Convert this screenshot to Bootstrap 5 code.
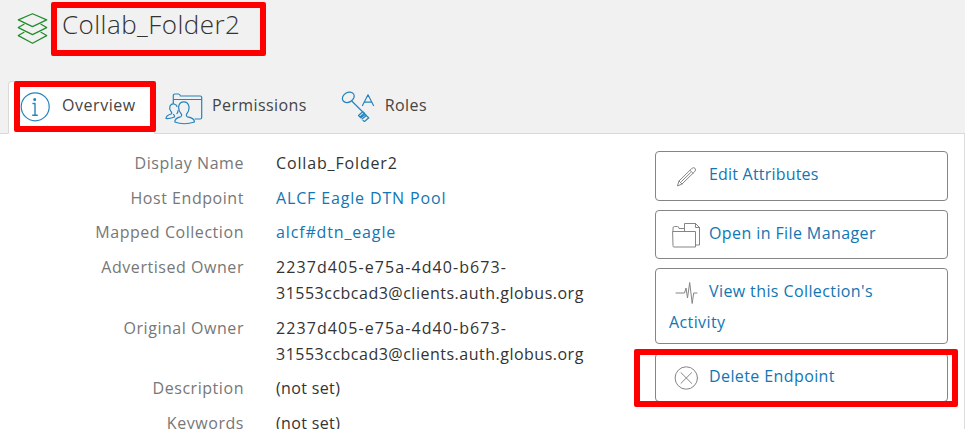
<!DOCTYPE html>
<html lang="en">
<head>
<meta charset="utf-8">
<meta name="viewport" content="width=device-width, initial-scale=1">
<title>Collab_Folder2</title>
<link href="https://cdn.jsdelivr.net/npm/bootstrap@5.3.0/dist/css/bootstrap.min.css" rel="stylesheet">
<style>
body{font-family:"Open Sans","Noto Sans",sans-serif;font-size:16px;line-height:26px;color:#333;height:429px;background:#fff}
svg{fill:none;stroke-linecap:round;stroke-linejoin:round;flex:none}
.page-head{background:#f1f1f1;height:81px;padding:9px 0 0 17px}
.page-head h1{font-size:26px;line-height:30px;font-weight:300;color:#333;margin-left:14px;letter-spacing:.45px}
.layers{margin-top:4px;stroke:#218c2c;stroke-width:1.2}
.tabs{background:#f1f1f1;height:53px;border-bottom:1px solid #d9d9d9;padding-left:8px}
.tabs .nav-link{color:#444;padding:0;height:53px;line-height:47px;display:flex;border:1px solid transparent;border-radius:4px 4px 0 0;letter-spacing:.4px}
.tabs .nav-link.active{background:#fff;border-color:#d9d9d9 #d9d9d9 #fff;width:147px;letter-spacing:.55px}
.blue{stroke:#2584bd;stroke-width:1.2}
.grey{stroke:#858585;stroke-width:1}
.i-info{margin:10px 12px 0 11px}
.i-perm{margin:10px 8px 0 8px}
.i-role{margin:8px 10px 0 32px}
.content{border-right:1px solid #ddd;height:295px;padding-top:16px}
.details{width:655px}
.details dt{width:244px;text-align:right;font-weight:400;color:#777;letter-spacing:.55px}
.details dd{margin:0 0 0 32px;white-space:nowrap;letter-spacing:.85px}
.details .item{display:flex;margin-bottom:8.7px}
.details .uuid{letter-spacing:1.08px}
.details .host{letter-spacing:.5px}
.details .unset{letter-spacing:.35px}
a,.details a{color:#1176b3;text-decoration:none}
.actions{width:293px;padding-top:1px;gap:9px}
.actions .btn{border:1px solid #858585;border-radius:4px;color:#1176b3;text-align:left;padding:7px 13px 0;line-height:31px;font-size:16px;height:49.5px;letter-spacing:.4px}
.actions svg{width:34px;height:30px;margin:-8px 6px -8px 0;vertical-align:-3px}
.actions .edit{letter-spacing:.2px}
.actions .two{height:75.5px}
.mark-box{border:6px solid #f00;border-radius:2px;pointer-events:none}
.m1{left:51px;top:2px;width:215px;height:54px}
.m2{left:14px;top:81px;width:142px;height:51px}
.m3{left:634px;top:349px;width:324px;height:58px}
</style>
<script src="https://cdn.jsdelivr.net/npm/bootstrap@5.3.0/dist/js/bootstrap.bundle.min.js"></script>
</head>
<body class="position-relative overflow-hidden">
<header class="page-head d-flex align-items-start">
<svg class="layers" width="31" height="32" viewBox="0 0 31 32"><path d="M15.500 .8 29.700 6.900 15.500 13.600 1.300 6.900ZM7 11.300 1.300 14.600l14.200 7 14.200-7L24 11.300M7 19.300 1.300 22.600l14.200 7.700 14.200-7.700L24 19.300"/></svg>
<h1 class="mb-0">Collab_Folder2</h1>
</header>
<nav class="tabs nav flex-nowrap">
<a class="nav-link active" href="#"><svg class="blue i-info" width="30" height="30" viewBox="0 0 30 30"><circle cx="15.200" cy="14.800" r="14"/><path d="M13 11.500H15V23M12.700 23.300H17.300" stroke-width="1.400"/><circle cx="14.700" cy="7.500" r=".9" fill="#2584bd"/></svg><span>Overview</span></a>
<a class="nav-link" href="#"><svg class="blue i-perm" width="40" height="34" viewBox="0 0 40 34"><path d="M9.300 11.500V3.700Q9.300 2 11 2H14.500Q16 2 16.300 4H36.200Q37.700 4 37.700 5.500V25.500Q37.700 27 36.200 27H31M9.300 7.500H37.700"/><path d="M9.500 22.500Q11 23.500 10.500 25Q5 27 2 26.500Q2 23.500 7 22Q8.500 21 7 19.500Q5 16.500 6 14Q7.500 11.500 10 12Q12.500 12.500 13 14.500M14 18.500Q14 20.500 13 21.500"/><path d="M17.300 22C13 17.500 14 9.800 19.800 9.800S26.500 17.500 22.700 22Q21.800 24 23.500 24.800Q30.500 26 30.500 30Q20 33.500 10.800 30Q10.800 26 16.500 24.800Q18.300 24 17.300 22Z"/></svg><span>Permissions</span></a>
<a class="nav-link" href="#"><svg class="blue i-role" width="34" height="34" viewBox="0 0 34 34"><ellipse cx="7.300" cy="7.300" rx="6.300" ry="4.800" transform="rotate(-32 7.300 7.300)"/><path d="M11 11.300 27.800 28M21.500 15.500 27 4.800 32.500 15.500M23.300 12.200H30.800M22 21.500 17.500 25.500 19 27 23.500 23M19.800 27.800 24.500 24.300M21 29 25.500 25.500M22 30.500 23.500 31.500 27.500 28"/></svg><span>Roles</span></a>
</nav>
<main class="content d-flex">
<dl class="details mb-0">
<div class="item"><dt>Display Name</dt><dd>Collab_Folder2</dd></div>
<div class="item"><dt>Host Endpoint</dt><dd><a href="#">ALCF Eagle DTN Pool</a></dd></div>
<div class="item"><dt>Mapped Collection</dt><dd><a href="#">alcf#dtn_eagle</a></dd></div>
<div class="item"><dt>Advertised Owner</dt><dd><span class="uuid">2237d405-e75a-4d40-b673-</span><br><span class="host">31553ccbcad3@clients.auth.globus.org</span></dd></div>
<div class="item"><dt>Original Owner</dt><dd><span class="uuid">2237d405-e75a-4d40-b673-</span><br><span class="host">31553ccbcad3@clients.auth.globus.org</span></dd></div>
<div class="item"><dt>Description</dt><dd class="unset">(not set)</dd></div>
<div class="item"><dt>Keywords</dt><dd class="unset">(not set)</dd></div>
</dl>
<div class="actions d-flex flex-column">
<a class="btn edit" href="#"><svg class="grey" viewBox="0 0 34 30"><path d="M8.500 24.500 10 20 22.500 7.700Q24.500 5.800 26 7.300T25.500 10.800L13 23ZM21 9.300 24 12.300M10 20 13 23M12.500 20.500 21.500 11.700"/></svg>Edit Attributes</a>
<a class="btn" href="#"><svg class="grey" viewBox="0 0 34 30"><path d="M4 11.500V8Q4 6.500 5.500 6.500H8.500Q9.800 6.500 10 8.500H15.500V3.500H26.500L30.500 7.500V25H26.500M26.500 3.500V7.500H30.500M4 11.500H26.500V27H5Q4 27 4 26ZM15.500 8.500V11.500"/></svg>Open in File Manager</a>
<a class="btn two" href="#"><svg class="grey" viewBox="0 0 34 30"><path d="M7 15H15.500L17 10 18.500 20 20.700 4.500 23.200 25.500 24.700 15H28"/></svg>View this Collection's<br>Activity</a>
<a class="btn" href="#"><svg class="grey" viewBox="0 0 34 30"><circle cx="17.300" cy="15" r="11.200"/><path d="M12 9.700 22.600 20.300M22.600 9.700 12 20.300"/></svg>Delete Endpoint</a>
</div>
</main>
<div class="mark-box m1 position-absolute"></div>
<div class="mark-box m2 position-absolute"></div>
<div class="mark-box m3 position-absolute"></div>
</body>
</html>
